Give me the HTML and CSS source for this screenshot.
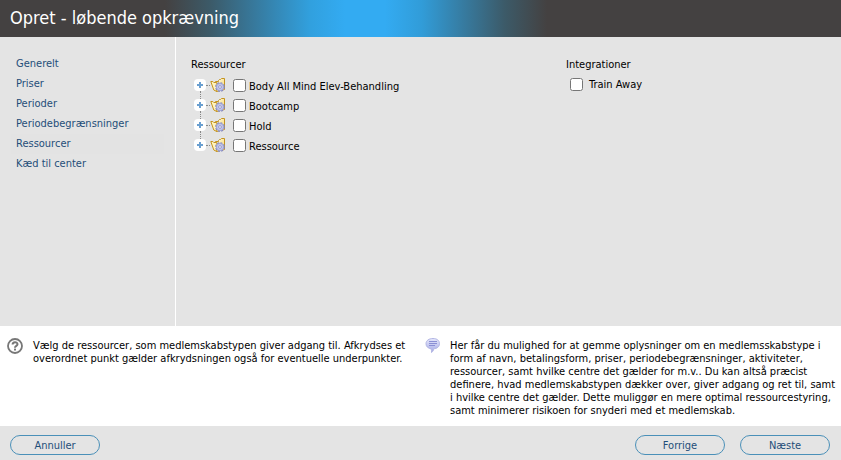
FILE: index.html
```html
<!DOCTYPE html>
<html lang="da">
<head>
<meta charset="utf-8">
<title>Opret - løbende opkrævning</title>
<link rel="stylesheet" href="styles.css">
</head>
<body>
<svg class="defs" aria-hidden="true">
  <defs>
    <linearGradient id="gold" x1="0" y1="0" x2="1" y2="1">
      <stop offset="0" stop-color="#fffbe0"/>
      <stop offset="1" stop-color="#f6d873"/>
    </linearGradient>
    <linearGradient id="bubble" x1="0" y1="0" x2="0" y2="1">
      <stop offset="0" stop-color="#e6e8fb"/>
      <stop offset="1" stop-color="#a3a8e6"/>
    </linearGradient>
    <symbol id="plus" viewBox="0 0 12 12">
      <rect width="12" height="12" rx="4" fill="#fff"/>
      <path d="M5 3h2v2h2v2H7v2H5V7H3V5h2z" fill="#6a9fd0"/>
    </symbol>
    <symbol id="folder" viewBox="0 0 16 16">
      <path d="M5.500 4.500h3v-1l1-1h1l1-1h3v11l-8 2z" fill="url(#gold)" stroke="#c4931f"/>
      <path d="M.8 4.500h2l1 1h3v9l-3-1.500z" fill="#fff3bd" stroke="#c4931f"/>
      <circle cx="10" cy="10" r="4.200" fill="#c5c8ec" stroke="#8286bb" stroke-width="1.400" stroke-dasharray="1.900 1.400"/>
      <circle cx="10" cy="10" r="3.600" fill="#c4c7ea" stroke="#9a9ed0" stroke-width=".8"/>
      <circle cx="10" cy="10" r="1.400" fill="#f2f0f4" stroke="#8b8fc4" stroke-width=".8"/>
    </symbol>
  </defs>
</svg>
<header class="title-bar"><h1>Opret - løbende opkrævning</h1></header>
<main class="main">
  <nav class="steps">
    <a href="#generelt">Generelt</a>
    <a href="#priser">Priser</a>
    <a href="#perioder">Perioder</a>
    <a href="#begraensninger">Periodebegrænsninger</a>
    <a href="#ressourcer" class="current">Ressourcer</a>
    <a href="#center">Kæd til center</a>
  </nav>
  <div class="content">
    <section>
      <h2>Ressourcer</h2>
      <ul class="tree">
        <li><button class="expand" aria-label="Udvid"><svg><use href="#plus"/></svg></button><span class="dots"></span><svg class="folder"><use href="#folder"/></svg><label><input type="checkbox"><span>Body All Mind Elev-Behandling</span></label></li>
        <li><button class="expand" aria-label="Udvid"><svg><use href="#plus"/></svg></button><span class="dots"></span><svg class="folder"><use href="#folder"/></svg><label><input type="checkbox"><span>Bootcamp</span></label></li>
        <li><button class="expand" aria-label="Udvid"><svg><use href="#plus"/></svg></button><span class="dots"></span><svg class="folder"><use href="#folder"/></svg><label><input type="checkbox"><span>Hold</span></label></li>
        <li><button class="expand" aria-label="Udvid"><svg><use href="#plus"/></svg></button><span class="dots"></span><svg class="folder"><use href="#folder"/></svg><label><input type="checkbox"><span>Ressource</span></label></li>
      </ul>
    </section>
    <section>
      <h2>Integrationer</h2>
      <label class="option"><input type="checkbox"><span>Train Away</span></label>
    </section>
  </div>
</main>
<section class="help">
  <div class="note">
    <svg class="note-icon" viewBox="0 0 16 16" aria-hidden="true">
      <circle cx="8" cy="8" r="7" fill="none" stroke="#777" stroke-width="1.800"/>
      <path d="M5.600 6.600c0-3.200 4.900-3.200 4.900-.3C10.500 7.900 8 7.800 8 9.700" fill="none" stroke="#777" stroke-width="2"/>
      <rect x="7" y="10.600" width="2" height="1.900" fill="#777"/>
    </svg>
    <p>Vælg de ressourcer, som medlemskabstypen giver adgang til. Afkrydses et<br>overordnet punkt gælder afkrydsningen også for eventuelle underpunkter.</p>
  </div>
  <div class="note">
    <svg class="note-icon" viewBox="0 0 16 16" aria-hidden="true">
      <path d="M9 .5c4 0 6.500 2 6.500 5.200 0 3-2.500 5-6 5.100.2 1.500-.5 2.600-2 3.700.2-1.400 0-2.500-.5-3.800C4 10.300 2 8.500 2 5.700 2 2.500 5 .5 9 .5z" fill="url(#bubble)" stroke="#b3b6e4"/>
      <path d="M5 3.500h8M5 5.500h8M5 7.500h6" stroke="#8a8fd4"/>
    </svg>
    <p>Her får du mulighed for at gemme oplysninger om en medlemsskabstype i<br>form af navn, betalingsform, priser, periodebegrænsninger, aktiviteter,<br>ressourcer, samt hvilke centre det gælder for m.v.. Du kan altså præcist<br>definere, hvad medlemskabstypen dækker over, giver adgang og ret til, samt<br>i hvilke centre det gælder. Dette muliggør en mere optimal ressourcestyring,<br>samt minimerer risikoen for snyderi med et medlemskab.</p>
  </div>
</section>
<footer class="actions">
  <button class="btn">Annuller</button>
  <div class="group"><button class="btn">Forrige</button><button class="btn">Næste</button></div>
</footer>
</body>
</html>
```
FILE: styles.css
```css
* { box-sizing: border-box; }
body {
  margin: 0;
  min-height: 100vh;
  display: flex;
  flex-direction: column;
  background: #e4e4e4;
  color: #000;
  font: 11px/13px Tahoma, "DejaVu Sans Condensed", "DejaVu Sans", sans-serif;
}
h1, h2, p, ul { margin: 0; padding: 0; font-weight: normal; }
.defs { position: absolute; width: 0; height: 0; }
.title-bar {
  padding: 6px 10px 7px;
  color: #fff;
  background: linear-gradient(90deg, #444141 165px, #3c5a68 210px, #31a0de 310px, #33abf2 345px, #33abf2 385px, #319cd8 422px, #3c5a68 505px, #444141 547px);
}
h1 { font-size: 18px; line-height: 24px; }
.main { flex: 1; display: flex; }
.steps {
  width: 176px;
  padding: 17px 11px 0 11px;
  border-right: 1px solid #fff;
}
.steps a {
  display: block;
  padding: 0 5px;
  line-height: 20px;
  color: #1f4e79;
  text-decoration: none;
}
.steps .current { background: #e3e3e3; }
.content {
  flex: 1;
  display: grid;
  grid-template-columns: 375px 1fr;
  padding: 18px 15px;
}
h2 { font-size: 11px; line-height: 20px; }
.tree { list-style: none; padding: 0 0 0 3px; }
.tree li { position: relative; display: flex; align-items: center; height: 20px; }
.tree li + li::before {
  content: "";
  position: absolute;
  left: 6px;
  top: -4px;
  height: 8px;
  border-left: 1px dotted #888;
}
.expand { padding: 0; border: 0; background: none; width: 12px; height: 12px; }
.expand svg { display: block; width: 12px; height: 12px; }
.dots { width: 4px; border-top: 1px dotted #888; }
.folder { width: 16px; height: 16px; margin-right: 7px; }
label { display: flex; align-items: center; }
input { width: 13px; height: 13px; margin: 0; }
.tree label { gap: 3px; }
.tree label span { padding-top: 2px; }
.option { gap: 6px; height: 18px; padding-left: 4px; }
.help {
  display: grid;
  grid-template-columns: 417px 1fr;
  min-height: 100px;
  padding: 12px 6px 9px 7px;
  background: #fff;
}
.note { display: flex; gap: 10px; }
.note-icon { flex: none; width: 16px; height: 16px; }
.note p { padding-top: 1px; white-space: nowrap; }
.actions {
  display: flex;
  justify-content: space-between;
  padding: 9px 11px 5px 10px;
}
.group { display: flex; gap: 15px; }
.btn {
  width: 90px;
  height: 20px;
  padding: 0;
  border: 1px solid #4a90b8;
  border-radius: 10px;
  background: transparent;
  color: #1f4e79;
  font: inherit;
}
```
